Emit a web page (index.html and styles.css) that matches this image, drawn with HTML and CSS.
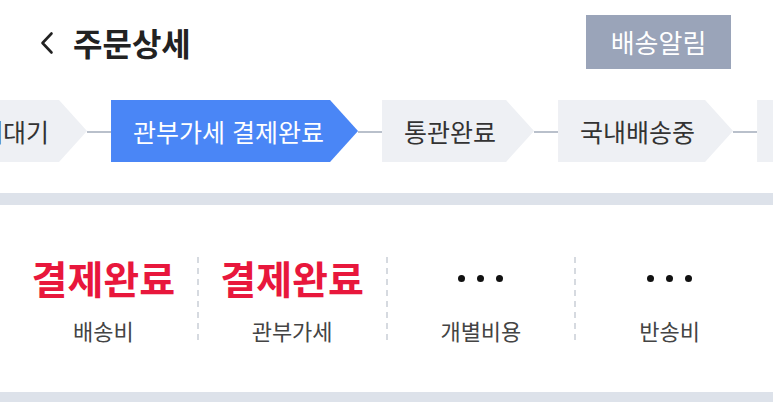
FILE: index.html
```html
<!DOCTYPE html>
<html lang="ko">
<head>
<meta charset="utf-8">
<link rel="stylesheet" href="styles.css">
</head>
<body>
<div class="page">
  <header class="header">
    <div class="title-wrap">
      <svg class="back" width="14" height="24" viewBox="0 0 14 24"><polyline points="11.5,2.5 2.5,12 11.5,21.5" fill="none" stroke="#222" stroke-width="2.6" stroke-linecap="round" stroke-linejoin="round"/></svg>
      <h1 class="title">주문상세</h1>
    </div>
    <button class="notify">배송알림</button>
  </header>

  <div class="stepper">
    <div class="step first">결제대기</div>
    <div class="link"></div>
    <div class="step active">관부가세 결제완료</div>
    <div class="link"></div>
    <div class="step">통관완료</div>
    <div class="link"></div>
    <div class="step">국내배송중</div>
    <div class="link"></div>
    <div class="step">배송완료</div>
  </div>

  <div class="band"></div>

  <section class="costs">
    <div class="cost">
      <div class="value paid">결제완료</div>
      <div class="label">배송비</div>
    </div>
    <div class="divider"></div>
    <div class="cost">
      <div class="value paid">결제완료</div>
      <div class="label">관부가세</div>
    </div>
    <div class="divider"></div>
    <div class="cost">
      <div class="value dots"><span></span><span></span><span></span></div>
      <div class="label">개별비용</div>
    </div>
    <div class="divider"></div>
    <div class="cost">
      <div class="value dots"><span></span><span></span><span></span></div>
      <div class="label">반송비</div>
    </div>
  </section>

  <div class="band bottom"></div>
</div>
</body>
</html>
```

FILE: styles.css
```css
* { box-sizing: border-box; }
html, body { margin: 0; padding: 0; }
body {
  background: #ffffff;
  font-family: "Noto Sans CJK KR", "Noto Sans", sans-serif;
  color: #222;
  width: 773px;
  height: 402px;
  overflow: hidden;
}
.page { width: 773px; }

.header {
  display: flex;
  align-items: center;
  justify-content: space-between;
  padding: 15px 42px 0 40px;
  height: 69px;
}
.title-wrap { display: flex; align-items: center; gap: 19px; }
.back { display: block; margin-top: 2px; }
.title {
  margin: 0;
  font-size: 32px;
  font-weight: 700;
  line-height: 42px;
  color: #222;
}
.notify {
  width: 145px;
  height: 54px;
  border: 0;
  background: #9aa4b9;
  color: #ffffff;
  font-family: inherit;
  font-size: 26px;
  font-weight: 400;
  padding: 0;
  line-height: 54px;
}

.stepper {
  display: flex;
  align-items: center;
  margin-top: 31px;
  height: 62px;
  overflow: hidden;
  white-space: nowrap;
}
.step {
  flex: none;
  height: 62px;
  line-height: 62px;
  padding: 0 38px 0 22px;
  font-size: 25px;
  color: #333;
  background: #eef0f4;
  clip-path: polygon(0 0, calc(100% - 28px) 0, 100% 50%, calc(100% - 28px) 100%, 0 100%);
}
.step.first { margin-left: -65px; }
.step.active { background: #4a86f6; color: #ffffff; padding-right: 34px; }
.link {
  flex: none;
  width: 24px;
  height: 2px;
  margin-top: 2px;
  background: #b9c0cb;
}

.band {
  height: 12px;
  margin-top: 31px;
  background: #dde2ea;
}
.band.bottom { margin-top: 0; height: 10px; }

.costs {
  display: flex;
  padding: 52px 10px 48px;
  height: 187px;
}
.cost {
  flex: 1;
  display: flex;
  flex-direction: column;
  align-items: center;
}
.value {
  height: 40px;
  line-height: 40px;
  font-size: 39px;
  font-weight: 700;
}
.paid { color: #e8173c; }
.dots {
  display: flex;
  align-items: center;
  gap: 12px;
  padding-top: 2px;
}
.dots span {
  width: 7px;
  height: 7px;
  border-radius: 50%;
  background: #111;
}
.label {
  margin-top: 19px;
  font-size: 22px;
  line-height: 28px;
  color: #444;
}
.divider {
  flex: none;
  width: 2px;
  height: 85px;
  background: repeating-linear-gradient(to bottom, #d6dae0 0 6px, transparent 6px 11px);
}
```
